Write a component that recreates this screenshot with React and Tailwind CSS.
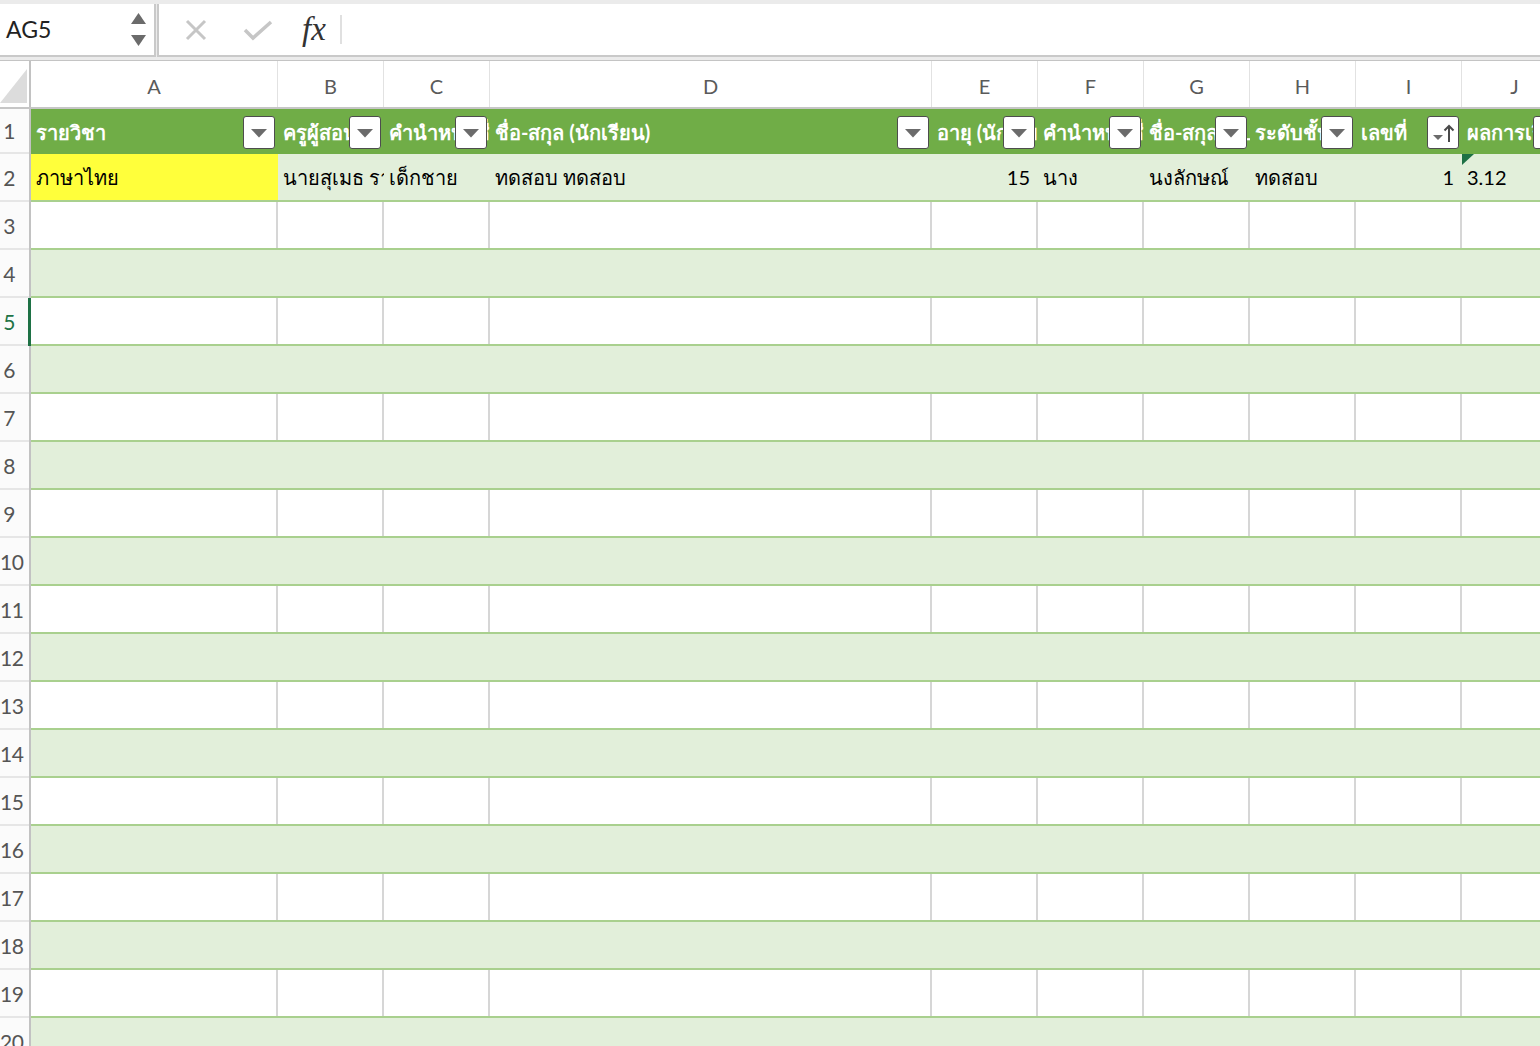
import React from "react";

const FONT = { fontFamily: "Lato, 'Noto Sans', 'DejaVu Sans', sans-serif" };

const cols = [
  { l: "A", w: "w-[247px]", h: "รายวิชา", d: "ภาษาไทย", yellow: true },
  { l: "B", w: "w-[106px]", h: "ครูผู้สอน", d: "นายสุเมธ รามสูร" },
  { l: "C", w: "w-[106px]", h: "คำนำหน้าชื่อ (นักเรียน)", d: "เด็กชาย" },
  { l: "D", w: "w-[442px]", h: "ชื่อ-สกุล (นักเรียน)", d: "ทดสอบ ทดสอบ" },
  { l: "E", w: "w-[106px]", h: "อายุ (นักเรียน)", d: "15", right: true },
  { l: "F", w: "w-[106px]", h: "คำนำหน้าชื่อ (ผู้ปกครอง)", d: "นาง" },
  { l: "G", w: "w-[106px]", h: "ชื่อ-สกุล (ผู้ปกครอง)", d: "นงลักษณ์" },
  { l: "H", w: "w-[106px]", h: "ระดับชั้น", d: "ทดสอบ" },
  { l: "I", w: "w-[106px]", h: "เลขที่", d: "1", right: true, sorted: true },
  { l: "J", w: "w-[106px]", h: "ผลการเรียน", d: "3.12", flag: true },
];

function FilterButton({ sorted }) {
  return (
    <div className="absolute right-[3px] top-[7px] w-[32px] h-[33px] bg-white border border-[#4d4d4d] rounded-[3px] flex items-center justify-center">
      {sorted ? (
        <svg width="26" height="24" viewBox="0 0 26 24">
          <polygon points="3,14 13,14 8,19" fill="#6b6b6b" />
          <path d="M19 21 V5 M14.5 9.5 L19 5 L23.5 9.5" stroke="#4a4a4a" strokeWidth="2" fill="none" />
        </svg>
      ) : (
        <svg width="16" height="10" viewBox="0 0 16 10" className="mt-[3px]">
          <polygon points="0,0 16,0 8,8.5" fill="#6b6b6b" />
        </svg>
      )}
    </div>
  );
}

function RowHeader({ n, h, active }) {
  return (
    <div
      className={`w-[31px] shrink-0 ${h} relative bg-[#fbfbfb] border-b-2 border-[#e6e6e6] flex items-center`}
    >
      <div
        className={`w-[18px] text-center text-[21px] leading-none whitespace-nowrap tracking-[-0.5px] ${active ? "text-[#217346]" : "text-[#555555]"}`}
      >
        {n}
      </div>
      <div
        className={`absolute right-0 top-0 bottom-[-2px] ${active ? "w-[3px] bg-[#1e7145]" : "w-[2px] bg-[#c2c2c2]"}`}
      />
    </div>
  );
}

export default function App() {
  const rows = [];
  for (let r = 3; r <= 20; r++) rows.push(r);

  return (
    <div className="w-[1540px] h-[1046px] overflow-hidden bg-white" style={FONT}>
      {/* Formula bar area */}
      <div className="h-[61px] bg-[#ebebeb] pt-[4px] flex items-start border-b border-[#c4c4c4]">
        <div className="w-[156px] h-[53px] bg-white border-r-2 border-b-2 border-[#c9c9c9] flex items-center justify-between pl-[6px] pr-[8px]">
          <span className="text-[23px] text-[#222222] leading-none">AG5</span>
          <div className="flex flex-col gap-[11px]">
            <svg width="15" height="11" viewBox="0 0 15 11">
              <polygon points="7.5,0 15,11 0,11" fill="#6b6b6b" />
            </svg>
            <svg width="15" height="11" viewBox="0 0 15 11">
              <polygon points="0,0 15,0 7.5,11" fill="#6b6b6b" />
            </svg>
          </div>
        </div>
        <div className="ml-[1px] flex-1 h-[53px] bg-white border-l-2 border-b-2 border-[#c9c9c9] flex items-center">
          <svg width="24" height="24" viewBox="0 0 24 24" className="ml-[25px]">
            <path d="M3 3 L21 21 M21 3 L3 21" stroke="#c6c6c6" strokeWidth="3" />
          </svg>
          <svg width="30" height="24" viewBox="0 0 30 24" className="ml-[35px]">
            <path d="M2 12 L10 20 L28 4" stroke="#c6c6c6" strokeWidth="3.5" fill="none" />
          </svg>
          <span
            className="ml-[29px] text-[33px] italic text-[#333333] leading-none"
            style={{ fontFamily: "'Liberation Serif', 'DejaVu Serif', serif" }}
          >
            fx
          </span>
          <div className="ml-[14px] w-[2px] h-[29px] bg-[#e0e0e0]" />
        </div>
      </div>

      {/* Column header */}
      <div className="flex h-[48px] border-b-2 border-[#c6c6c6] bg-white">
        <div className="w-[31px] shrink-0 relative border-r-2 border-[#c2c2c2]">
          <svg width="27" height="36" viewBox="0 0 27 36" className="absolute left-0 top-[8px]">
            <polygon points="27,0 27,34 0,34" fill="#dcdcdc" />
          </svg>
        </div>
        {cols.map((c) => (
          <div
            key={c.l}
            className={`${c.w} shrink-0 border-r border-[#e2e2e2] flex items-center justify-center pt-[3px] text-[20px] text-[#5a5a5a]`}
          >
            {c.l}
          </div>
        ))}
      </div>

      {/* Row 1: table header */}
      <div className="flex">
        <RowHeader n={1} h="h-[45px]" />
        {cols.map((c) => (
          <div
            key={c.l}
            className={`${c.w} shrink-0 h-[45px] relative bg-[#70ad47] overflow-hidden`}
          >
            <div className="h-full flex items-center pl-[5px] whitespace-nowrap text-white font-bold text-[20px]">
              {c.h}
            </div>
            <FilterButton sorted={c.sorted} />
          </div>
        ))}
      </div>

      {/* Row 2: data */}
      <div className="flex">
        <RowHeader n={2} h="h-[48px]" />
        <div className="flex border-b-2 border-[#a9d08e] h-[48px] bg-[#e2efda]">
          {cols.map((c) => (
            <div
              key={c.l}
              className={`${c.w} shrink-0 h-full relative overflow-hidden ${c.yellow ? "bg-[#ffff3b]" : ""}`}
            >
              <div
                className={`h-full flex items-center whitespace-nowrap text-[20px] text-black ${c.right ? "justify-end pr-[8px]" : "pl-[5px]"}`}
              >
                {c.d}
              </div>
              {c.flag && (
                <svg width="12" height="11" viewBox="0 0 12 11" className="absolute left-0 top-0">
                  <polygon points="0,0 12,0 0,11" fill="#1e7145" />
                </svg>
              )}
            </div>
          ))}
        </div>
      </div>

      {/* Empty rows */}
      {rows.map((r) => {
        const band = r % 2 === 0;
        return (
          <div key={r} className="flex">
            <RowHeader n={r} h="h-[48px]" active={r === 5} />
            <div
              className={`flex border-b-2 border-[#a9d08e] h-[48px] ${band ? "bg-[#e2efda]" : "bg-white"}`}
            >
              {cols.map((c) => (
                <div
                  key={c.l}
                  className={`${c.w} shrink-0 h-full ${band ? "" : "border-r-2 border-[#d6d6d6]"}`}
                />
              ))}
            </div>
          </div>
        );
      })}
    </div>
  );
}
